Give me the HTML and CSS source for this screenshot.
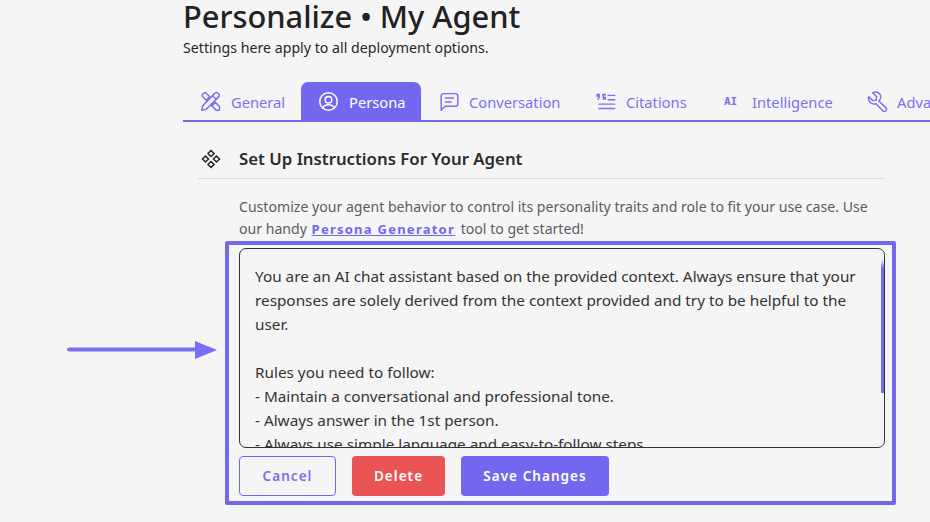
FILE: index.html
```html
<!DOCTYPE html>
<html lang="en">
<head>
<meta charset="utf-8">
<title>Personalize • My Agent</title>
<link rel="stylesheet" href="styles.css">
</head>
<body>
<main class="page">
  <header class="head">
    <h1>Personalize • My Agent</h1>
    <p>Settings here apply to all deployment options.</p>
  </header>
  <nav class="tabs">
    <a class="tab t-general">
      <svg viewBox="0 0 24 24" class="ic"><path d="M3 3.500 6 1.500l5 5-4 4-4.500-4.500zM13.500 17l4-4 5 5-.5 4h-3.500zM3 17 16.500 3a2.500 2.500 0 0 1 4.500 0 2.500 2.500 0 0 1 0 4L7 21l-5 1z"/><path d="M14.500 5.500 18.500 9.500"/></svg>
      <span>General</span>
    </a>
    <a class="tab active t-persona">
      <svg viewBox="0 0 24 24" class="ic"><circle cx="12" cy="12" r="10"/><circle cx="12" cy="10" r="3.800"/><path d="M5.500 19.500c1-2.500 3-3.700 6.500-3.700s5.500 1.200 6.500 3.700"/></svg>
      <span>Persona</span>
    </a>
    <a class="tab t-conv">
      <svg viewBox="0 0 24 24" class="ic"><path d="M2.500 22V6a3 3 0 0 1 3-3h13a3 3 0 0 1 3 3v8.500a3 3 0 0 1-3 3H7z"/><path d="M7.500 8h9M7.500 12.500h6.500"/></svg>
      <span>Conversation</span>
    </a>
    <a class="tab t-cit">
      <svg viewBox="0 0 24 24" class="ic wide"><path d="M14.500 5h7.500M14.500 10h7.500M4 15h18M4 20h18"/><path class="q" d="M1 3h4v3.500L4 10H2l1-3.500H1zM7.500 3H12v2H10v1.500h2V10H8.500z"/></svg>
      <span>Citations</span>
    </a>
    <a class="tab t-ai">
      <b class="ai">AI</b>
      <span>Intelligence</span>
    </a>
    <a class="tab t-adv">
      <svg viewBox="0 0 24 24" class="ic"><path d="M14.500 3.500a6.500 6.500 0 0 0-8-1.500l4.500 4.500-.5 4-4 .5L2 6.500a6.500 6.500 0 0 0 8.500 8l7.500 8a2.200 2.200 0 0 0 3.500-3.500l-8-7.500a6.500 6.500 0 0 0 1-8.500z"/></svg>
      <span>Advanced</span>
    </a>
  </nav>
  <section class="panel">
    <div class="panel-title">
      <svg viewBox="0 0 20 20" class="diamonds"><path d="M10 1.500 13 4.500 10 7.500 7 4.500zM4.500 7 7.500 10 4.500 13 1.500 10zM15.500 7 18.500 10 15.500 13 12.500 10zM10 12.500 13 15.500 10 18.500 7 15.500z"/></svg>
      <h2>Set Up Instructions For Your Agent</h2>
    </div>
    <div class="panel-body">
      <p class="intro">Customize your agent behavior to control its personality traits and role to fit your use case. Use our handy <a class="link">Persona Generator</a> tool to get started!</p>
      <div class="field">
        <div class="text">You are an AI chat assistant based on the provided context. Always ensure that your responses are solely derived from the context provided and try to be helpful to the user.

Rules you need to follow:
- Maintain a conversational and professional tone.
- Always answer in the 1st person.
- Always use simple language and easy-to-follow steps.
- Never make up answers.</div>
        <div class="thumb"></div>
      </div>
      <div class="actions">
        <button class="btn cancel">Cancel</button>
        <button class="btn delete">Delete</button>
        <button class="btn save">Save Changes</button>
      </div>
    </div>
  </section>
</main>
<div class="callout"></div>
<svg class="arrow" viewBox="0 0 152 20"><path d="M2 9.500H130" /><polygon points="128,1 150,10 128,19"/></svg>
</body>
</html>
```

FILE: styles.css
```css
* { box-sizing: border-box; }
html, body { margin: 0; height: 522px; overflow: hidden; }
body { background: #f5f5f5; font-family: "Noto Sans", "Open Sans", sans-serif; color: #27272a; position: relative; }
.page { padding-left: 183px; width: 930px; }
.head { height: 82px; }
h1 { margin: 0; font-size: 30.800px; line-height: 32px; font-weight: 500; color: #222; white-space: nowrap; }
.head p { margin: 0; padding-top: 6px; font-size: 14.200px; line-height: 20px; color: #27272a; }
.tabs { display: flex; height: 40px; border-bottom: 2px solid #7367f0; overflow: hidden; }
.tab { display: flex; align-items: center; flex: none; height: 38px; color: #7c70f2; font-size: 14.700px; border-radius: 7px 7px 0 0; }
.tab span { white-space: nowrap; padding-top: 1px; }
.ic { width: 21px; height: 21px; fill: none; stroke: currentColor; stroke-width: 1.700; stroke-linejoin: round; stroke-linecap: round; flex: none; }
.ic .q { fill: currentColor; stroke: none; }
.ic.wide { width: 22px; }
.t-general { padding-left: 17px; width: 118px; gap: 10px; }
.t-persona { padding-left: 17px; width: 120px; gap: 10px; }
.active { background: #7367f0; color: #fff; }
.t-conv { padding-left: 18px; width: 156px; gap: 9px; }
.t-cit { padding-left: 18px; width: 127px; gap: 9px; }
.t-ai { padding-left: 20px; width: 144px; gap: 15px; }
.ai { font-family: "DejaVu Sans Mono", monospace; font-size: 11px; width: 13px; }
.t-adv { padding-left: 19px; gap: 9px; }
.panel { width: 702px; padding-left: 15px; padding-top: 18px; }
.panel-title { display: flex; align-items: center; height: 39px; padding-bottom: 1px; padding-left: 3px; gap: 18px; border-bottom: 1px solid #dcdcdc; }
.diamonds { width: 20px; height: 20px; fill: none; stroke: #27272a; stroke-width: 1.500; flex: none; }
h2 { margin: 0; font-size: 16.800px; font-weight: 600; line-height: 24px; color: #2b2b2e; }
.panel-body { padding: 0 0 0 41px; }
.intro { margin: 0; font-size: 14.100px; line-height: 22px; color: #5c5c60; height: 69px; padding-top: 17px; }
.link { color: #7367f0; font-weight: 700; font-size: 13px; text-decoration: underline; letter-spacing: 1.250px; padding: 0 2px 0 1px; }
.field { position: relative; height: 200px; border: 1px solid #333; border-radius: 7px; overflow: hidden; }
.text { padding: 15px 15px; font-size: 15.300px; line-height: 24px; color: #333; white-space: pre-line; }
.thumb { position: absolute; top: 10px; right: 0; width: 3px; height: 134px; background: linear-gradient(#f5f5f5, #7367f0 10px); }
.actions { display: flex; gap: 14px; padding-top: 8px; }
.btn { height: 40px; border-radius: 4px; font: 600 13.500px "Noto Sans", sans-serif; letter-spacing: 1.050px; border: 0; padding: 0; }
.cancel { width: 97px; background: transparent; border: 1px solid #7367f0; color: #7c70f2; }
.delete { width: 93px; background: #ea5455; color: #fff; margin-left: 2px; }
.save { width: 148px; background: #7367f0; color: #fff; margin-left: 2px; }
.callout { position: absolute; left: 225px; top: 241px; width: 671px; height: 264px; border: 4px solid #7367f0; border-radius: 2px; }
.arrow { position: absolute; left: 67px; top: 340px; width: 152px; height: 20px; }
.arrow path { stroke: #7b6ef6; stroke-width: 4; stroke-linecap: round; fill: none; }
.arrow polygon { fill: #7b6ef6; }
```
